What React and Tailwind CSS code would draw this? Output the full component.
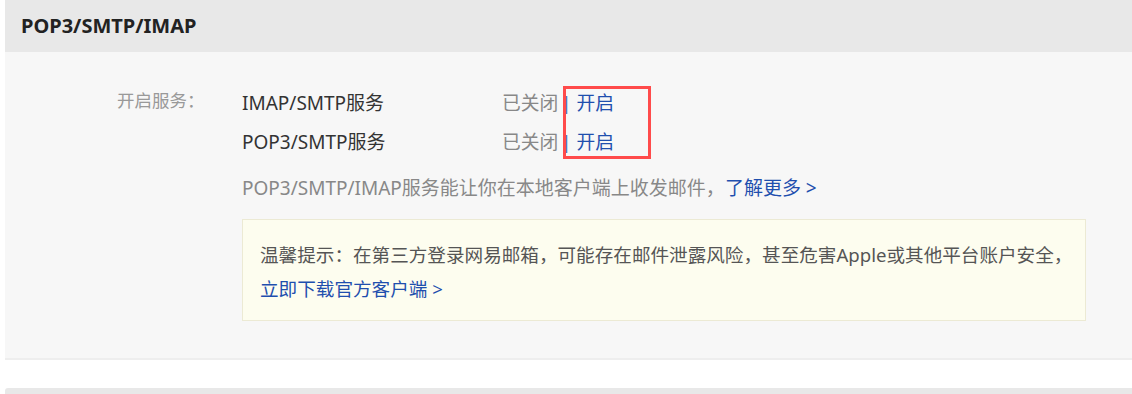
// App.jsx
// Mail settings panel: POP3/SMTP/IMAP service toggles with a warm-tip box.

const FONT = { fontFamily: '"Noto Sans", "Noto Sans CJK SC", sans-serif' };

const services = [
  { name: 'IMAP/SMTP服务', status: '已关闭' },
  { name: 'POP3/SMTP服务', status: '已关闭' },
];

function ServiceRow({ name, status }) {
  return (
    <div className="flex h-[39px] items-center">
      <span className="w-[260px] text-[19px] text-[#333]">{name}</span>
      <span className="text-[18.75px] text-[#888]">{status}</span>
      <a href="#" className="ml-[3px] text-[18.75px] text-[#1f4fae]">
        <span className="text-[#4a6fb5]">|</span>&nbsp;开启
      </a>
    </div>
  );
}

export default function App() {
  return (
    <div className="min-h-screen bg-white pl-[5px]" style={FONT}>
      {/* ── POP3/SMTP/IMAP panel ─────────────────────────────── */}
      <section className="rounded-tl-[3px] border-b-2 border-[#eeeeee] bg-[#f7f7f7]">
        <header className="flex h-[52px] items-center bg-[#e8e8e8] pl-[16px]">
          <h2 className="text-[20px] font-bold text-[#222]">POP3/SMTP/IMAP</h2>
        </header>

        <div className="flex pt-[32px] pb-[37px]">
          <div className="w-[237px] pl-[112px]">
            <div className="flex h-[39px] items-center pb-[6px] text-[17.5px] text-[#999]">
              开启服务：
            </div>
          </div>

          <div className="w-[844px]">
            <div className="relative">
              {services.map((s) => (
                <ServiceRow key={s.name} name={s.name} status={s.status} />
              ))}
              {/* annotation frame round the two toggles */}
              <div className="absolute left-[321px] top-[2px] h-[73px] w-[88px] border-[3px] border-[#ff4b4b]" />
            </div>

            <p className="mt-[12px] h-[28px] text-[19px] leading-[28px] text-[#888]">
              POP3/SMTP/IMAP服务能让你在本地客户端上收发邮件，
              <a href="#" className="text-[#1f4fae]">了解更多 &gt;</a>
            </p>

            <div className="mt-[17px] border border-[#ecead4] bg-[#fdfdef] px-[17px] pt-[18px] pb-[14px] text-[18.6px] leading-[34px]">
              <p className="whitespace-nowrap text-[#555]">
                温馨提示：在第三方登录网易邮箱，可能存在邮件泄露风险，甚至危害Apple或其他平台账户安全，
              </p>
              <a href="#" className="text-[#1f4fae]">立即下载官方客户端 &gt;</a>
            </div>
          </div>
        </div>
      </section>

      {/* ── next panel (header only visible) ─────────────────── */}
      <section className="mt-[28px] h-[52px] rounded-tl-[3px] bg-[#e8e8e8]" />
    </div>
  );
}
